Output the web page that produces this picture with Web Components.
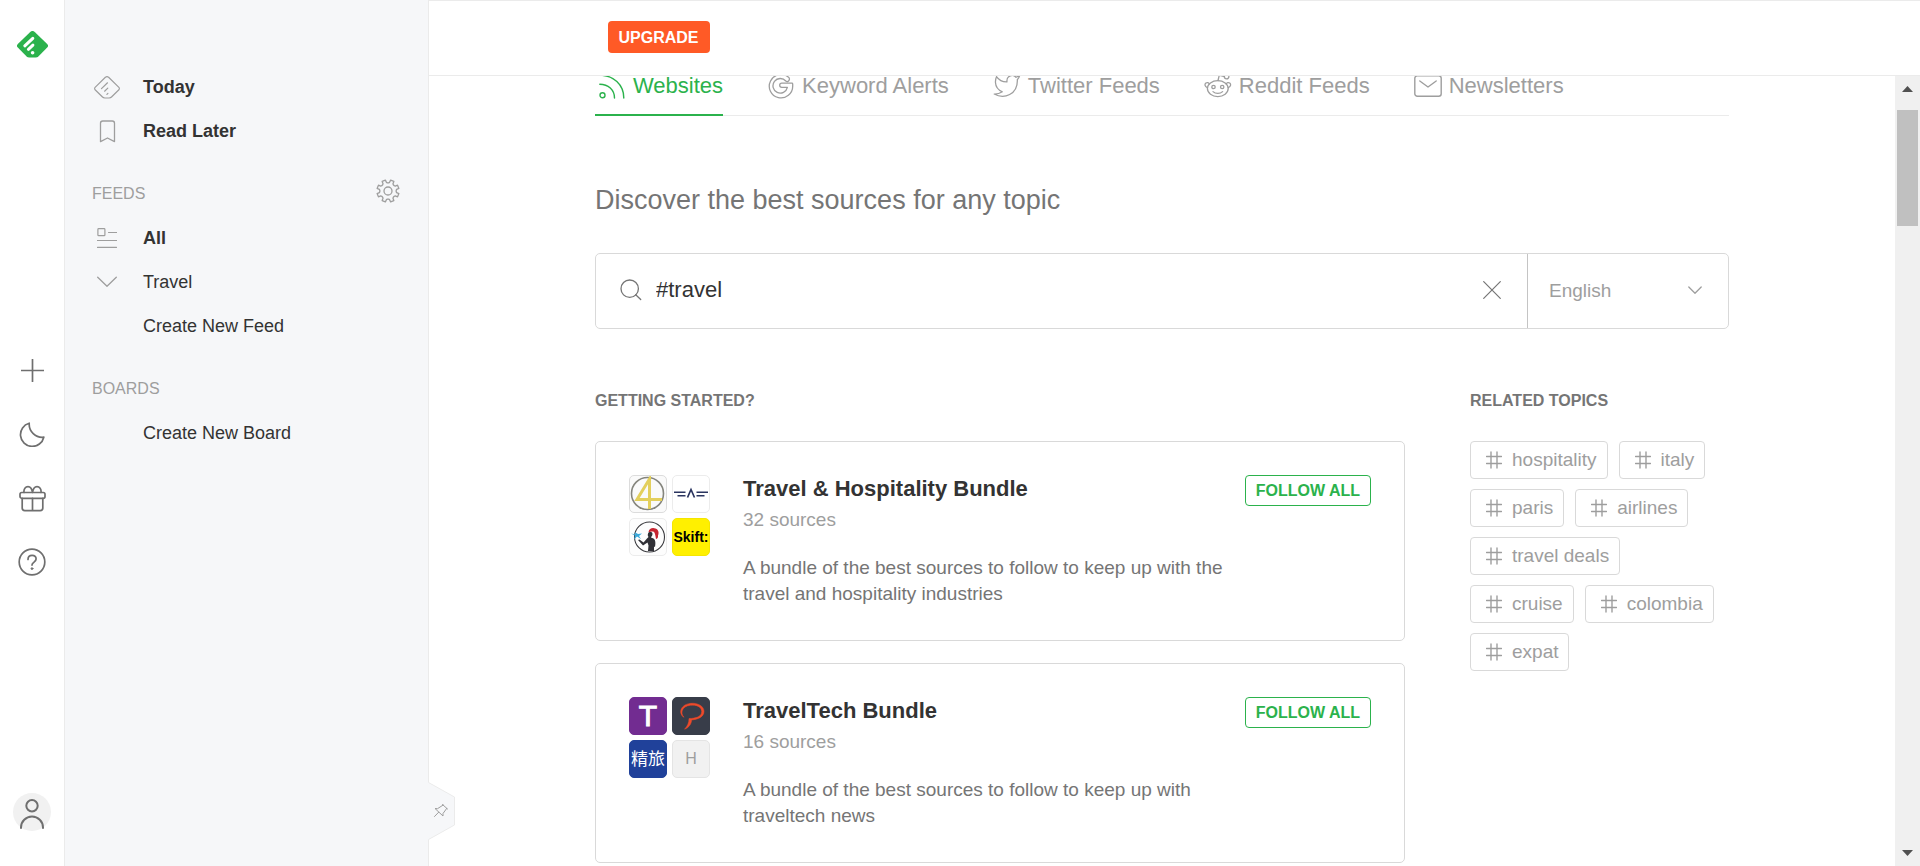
<!DOCTYPE html>
<html lang="en">
<head>
<meta charset="UTF-8">
<meta name="viewport" content="width=device-width, initial-scale=1.0">
<title>Discover sources</title>
<style>
  :root {
    --green: #2bb24c;
    --orange: #ff5a26;
    --text: #333;
    --text-mid: #757575;
    --text-light: #9e9e9e;
    --line: #d9d9d9;
    --line-soft: #ebebeb;
    --panel: #f6f7f9;
  }

  body {
    margin: 0;
    font-family: "Liberation Sans", Arial, "Noto Sans CJK SC", sans-serif;
    font-size: 19px;
    color: var(--text);
    background: #fff;
  }
</style>
</head>
<body>
<app-shell>
  <nav-rail slot="rail"></nav-rail>

  <side-nav slot="side">
    <side-item icon="today" strong>Today</side-item>
    <side-item icon="bookmark" strong>Read Later</side-item>
    <side-heading settings>FEEDS</side-heading>
    <side-item icon="list" strong>All</side-item>
    <side-item icon="chevron">Travel</side-item>
    <side-item>Create New Feed</side-item>
    <side-heading>BOARDS</side-heading>
    <side-item>Create New Board</side-item>
  </side-nav>

  <top-bar slot="top"></top-bar>

  <discover-page>
    <source-tab slot="tabs" icon="rss" active>Websites</source-tab>
    <source-tab slot="tabs" icon="google">Keyword Alerts</source-tab>
    <source-tab slot="tabs" icon="twitter">Twitter Feeds</source-tab>
    <source-tab slot="tabs" icon="reddit">Reddit Feeds</source-tab>
    <source-tab slot="tabs" icon="mail">Newsletters</source-tab>

    <source-search slot="search"></source-search>

    <bundle-card slot="bundles">
      <source-logo slot="logos" logo="four"></source-logo>
      <source-logo slot="logos" logo="wings"></source-logo>
      <source-logo slot="logos" logo="traveler"></source-logo>
      <source-logo slot="logos" logo="skift"></source-logo>
      <span slot="title">Travel &amp; Hospitality Bundle</span>
      <span slot="count">32 sources</span>
      A bundle of the best sources to follow to keep up with the travel and hospitality industries
    </bundle-card>
    <bundle-card slot="bundles">
      <source-logo slot="logos" logo="tnooz"></source-logo>
      <source-logo slot="logos" logo="phocus"></source-logo>
      <source-logo slot="logos" logo="jinglv"></source-logo>
      <source-logo slot="logos" logo="letter"></source-logo>
      <span slot="title">TravelTech Bundle</span>
      <span slot="count">16 sources</span>
      A bundle of the best sources to follow to keep up with traveltech news
    </bundle-card>

    <topic-tag slot="topics">hospitality</topic-tag>
    <topic-tag slot="topics">italy</topic-tag>
    <topic-tag slot="topics">paris</topic-tag>
    <topic-tag slot="topics">airlines</topic-tag>
    <topic-tag slot="topics">travel deals</topic-tag>
    <topic-tag slot="topics">cruise</topic-tag>
    <topic-tag slot="topics">colombia</topic-tag>
    <topic-tag slot="topics">expat</topic-tag>
  </discover-page>

  <scroll-track slot="scroll"></scroll-track>
</app-shell>

<script>
// Eight rounded teeth around a centre point
function gearPath(c, outer, inner) {
  const pts = [];
  for (let i = 0; i < 8; i++) {
    const mid = i * 45 + 22.5;
    [[-18, inner], [-12, inner + 0.6], [-9, outer], [9, outer], [12, inner + 0.6], [18, inner]].forEach(([d, r]) => {
      const a = (mid + d) * Math.PI / 180;
      pts.push((c + r * Math.cos(a)).toFixed(2) + ' ' + (c + r * Math.sin(a)).toFixed(2));
    });
  }
  return 'M' + pts.join('L') + 'Z';
}

// name: [width, height, stroke width, markup]
const ICONS = {
  logo: [31, 27, 0, `
    <path d="M13 1.2a3.6 3.6 0 0 1 5 0L30.2 13a2.6 2.6 0 0 1 0 3.6l-8.6 8.6a4.5 4.5 0 0 1-3 1.3h-6.2a4.5 4.5 0 0 1-3-1.3L.8 16.6a2.6 2.6 0 0 1 0-3.6z" fill="#2bb24c"/>
    <g stroke="#fff" stroke-width="3" stroke-linecap="round"><path d="M7.8 14.8l8-7.500M11.400 18.300l4.500-4.200"/></g>
    <circle cx="15.600" cy="21.700" r="1.800" fill="#fff"/>`],
  plus: [23, 23, 1.7, '<path d="M11.5.5v22M.5 11.5h22"/>'],
  moon: [26, 25, 1.7, '<path d="M10.2 1.2A11.8 11.8 0 1 0 24.8 15.2 13.2 13.2 0 0 1 10.2 1.2z"/>'],
  gift: [27, 27, 1.7, `
    <rect x="1" y="7.5" width="25" height="5.8" rx="1.8"/>
    <path d="M3.2 13.3v9.7a2.6 2.6 0 0 0 2.6 2.6h15.4a2.6 2.6 0 0 0 2.6-2.6v-9.7M13.5 13.3v12.3M5 7.5C4.5 3.8 6.5 1.6 9 1.6c2.6 0 4 2.5 4.5 5.9C14 4.1 15.4 1.6 18 1.6c2.5 0 4.5 2.2 4 5.9"/>`],
  help: [28, 28, 1.7, `
    <circle cx="14" cy="14" r="12.8"/>
    <path d="M10 11.4c0-2.6 1.8-4 4.1-4s4 1.4 4 3.7c0 3-4.1 3-4.1 6"/>
    <circle cx="14" cy="20.6" r=".9" fill="currentColor" stroke-width="1"/>`],
  user: [38, 38, 2, '<circle cx="19" cy="12.8" r="5.7"/><path d="M8 35v-.5a11 11 0 0 1 22 0v.5"/>'],
  today: [26, 23, 1.2, `
    <path d="M11.4 1.3a2.2 2.2 0 0 1 3.2 0L24.9 11.4a1.6 1.6 0 0 1 0 2.3L17.5 21a3.3 3.3 0 0 1-2.3 1h-4.4a3.3 3.3 0 0 1-2.3-1L1.1 13.7a1.6 1.6 0 0 1 0-2.300z"/>
    <path d="M7.500 12.600l6-5.800M10.600 15.200l3.200-3.100M12.900 18.300l1-1"/>`],
  bookmark: [17, 23, 1.3, '<path d="M1.5 21.6V3.2A2.2 2.2 0 0 1 3.700 1h9.600a2.200 2.200 0 0 1 2.200 2.200v18.400l-7-3.600z"/>'],
  list: [20, 20, 1.2, '<rect x=".9" y=".7" width="7" height="7" rx=".8"/><path d="M11.5 4.500h8M.5 12.500h19M.5 19.300h19"/>'],
  chevron: [20, 12, 1.3, '<path d="M.7 1.2l9.300 9 9.300-9"/>'],
  chevronSmall: [14, 9, 1.3, '<path d="M.8 1l6.200 6.200L13.200 1"/>'],
  gear: [24, 24, 1.3, `<path d="${gearPath(12, 11.2, 8.2)}"/><circle cx="12" cy="12" r="4"/>`],
  rss: [26, 26, 1.4, '<circle cx="3.5" cy="22.200" r="2.500"/><path d="M.8 2.200c13.500 0 24 9.500 24 22.800M.8 11.200C9.200 11.200 15.500 17 15.500 25"/>'],
  google: [26, 26, 1.3, '<path d="M20.600 4.300A11.700 11.700 0 1 0 24.700 13v-2a.8.8 0 0 0-.8-.8H13.800a2 2 0 0 0 0 4.200h5.600A7.300 7.300 0 1 1 17.800 8a2.200 2.200 0 0 0 3-.3 2.300 2.300 0 0 0-.2-3.400z"/>'],
  twitter: [28, 24, 1.3, '<path transform="translate(0 -2) scale(1.16)" stroke-width="1.1" d="M23 3a10.900 10.900 0 0 1-3.140 1.530 4.480 4.480 0 0 0-7.860 3v1A10.660 10.660 0 0 1 3 4s-4 9 5 13a11.640 11.640 0 0 1-7 2c9 5 20 0 20-11.500a4.500 4.500 0 0 0-.08-.83A7.720 7.720 0 0 0 23 3z"/>'],
  reddit: [28, 24, 1.3, `
    <ellipse cx="13.800" cy="14.600" rx="10.400" ry="8"/>
    <path d="M5.300 9.900C4.600 8.400 3 8.200 1.900 9.100c-1.400 1.100-1.300 3.200 1.500 4.700M22.300 9.900c.7-1.500 2.300-1.700 3.400-.8 1.400 1.100 1.300 3.200-1.500 4.700M14 6.500l1.300-5.300 5.200 1.400M9 17.600c2.500 2.400 7.100 2.400 9.600 0"/>
    <circle cx="9.500" cy="13" r="1.700"/><circle cx="18.200" cy="13" r="1.700"/><circle cx="22.600" cy="2.600" r="2.300"/>`],
  mail: [28, 22, 1.4, '<rect x=".8" y=".8" width="26.400" height="20.400" rx="2.500"/><path d="M5.800 6l8.200 6 8.200-6"/>'],
  search: [22, 22, 1.3, '<circle cx="9.700" cy="9.700" r="8.700"/><path d="M15.700 15.700l5 4.800"/>'],
  close: [18, 18, 1.2, '<path d="M.7.7l16.600 16.600M17.300.7L.7 17.300"/>'],
  hash: [16, 18, 1.4, '<path d="M5 1v16M11 1v16M.5 5.500h15M.5 12.500h15"/>'],
  pin: [16, 16, 1, '<path d="M9.500 1.500l5 4.500M10.200 2L4.500 5.700 2 5.500l8 7.500v-2.500l3.800-5.200M5.700 9.200L1.500 13.500"/>']
};

class UiIcon extends HTMLElement {
  constructor() {
    super();
    this.attachShadow({ mode: 'open' });
  }

  connectedCallback() {
    const [w, h, stroke, body] = ICONS[this.getAttribute('name')];
    this.shadowRoot.innerHTML = `
      <style>
        :host { display: inline-flex; flex: none; }
        svg { display: block; }
      </style>
      <svg width="${w}" height="${h}" viewBox="0 0 ${w} ${h}" fill="none" stroke="${stroke ? 'currentColor' : 'none'}"
        stroke-width="${stroke}" stroke-linecap="round" stroke-linejoin="round" aria-hidden="true">${body}</svg>
    `;
  }
}

class AppShell extends HTMLElement {
  constructor() {
    super();
    this.attachShadow({ mode: 'open' });
    this.shadowRoot.innerHTML = `
      <style>
        :host {
          display: flex;
          height: 100vh;
          overflow: hidden;
        }

        .main {
          flex: 1;
          min-width: 0;
          display: flex;
          flex-direction: column;
        }

        .view {
          flex: 1;
          min-height: 0;
          display: flex;
        }

        main {
          flex: 1;
          min-width: 0;
          overflow: hidden;
        }
      </style>
      <slot name="rail"></slot>
      <slot name="side"></slot>
      <div class="main">
        <slot name="top"></slot>
        <div class="view">
          <main><slot></slot></main>
          <slot name="scroll"></slot>
        </div>
      </div>
    `;
  }
}

class NavRail extends HTMLElement {
  constructor() {
    super();
    this.attachShadow({ mode: 'open' });
    this.shadowRoot.innerHTML = `
      <style>
        :host {
          display: flex;
          flex-direction: column;
          align-items: center;
          flex: none;
          width: 64px;
          padding: 31px 0 35px;
          box-sizing: border-box;
          color: #6f6f6f;
        }

        .tools {
          display: flex;
          flex-direction: column;
          gap: 24px;
          margin: auto 0 211px;
        }

        button {
          display: flex;
          align-items: center;
          justify-content: center;
          width: 40px;
          height: 40px;
          padding: 0;
          border: 0;
          background: none;
          color: inherit;
        }

        .account {
          width: 38px;
          height: 38px;
          border-radius: 50%;
          background: #f1f1f1;
        }
      </style>
      <a href="#" aria-label="Home"><ui-icon name="logo"></ui-icon></a>
      <div class="tools">
        <button aria-label="Add content"><ui-icon name="plus"></ui-icon></button>
        <button aria-label="Night mode"><ui-icon name="moon"></ui-icon></button>
        <button aria-label="Gift"><ui-icon name="gift"></ui-icon></button>
        <button aria-label="Help"><ui-icon name="help"></ui-icon></button>
      </div>
      <button class="account" aria-label="Account"><ui-icon name="user"></ui-icon></button>
    `;
  }
}

class SideNav extends HTMLElement {
  constructor() {
    super();
    this.attachShadow({ mode: 'open' });
    this.shadowRoot.innerHTML = `
      <style>
        :host {
          display: block;
          position: relative;
          z-index: 1;
          flex: none;
          width: 365px;
          padding-top: 65px;
          box-sizing: border-box;
          background: var(--panel);
          border-left: 1px solid var(--line-soft);
          border-right: 1px solid var(--line-soft);
        }

        /* Tab that sticks out over the page */
        .pin {
          position: absolute;
          left: 100%;
          bottom: 26px;
          display: flex;
          padding: 0;
          border: 0;
          background: none;
          color: var(--text-light);
        }

        .pin ui-icon {
          position: absolute;
          left: 5px;
          top: 21px;
        }
      </style>
      <nav><slot></slot></nav>
      <button class="pin" aria-label="Pin sidebar">
        <svg width="27" height="58" viewBox="0 0 27 58" aria-hidden="true">
          <path d="M0 0l26.500 15v28L0 58z" fill="#f6f7f9"/>
          <path d="M.5.500l26 14.500v28L.5 57.500" fill="none" stroke="#ebebeb"/>
        </svg>
        <ui-icon name="pin"></ui-icon>
      </button>
    `;
  }
}

class SideItem extends HTMLElement {
  constructor() {
    super();
    this.attachShadow({ mode: 'open' });
  }

  connectedCallback() {
    const icon = this.getAttribute('icon');
    this.shadowRoot.innerHTML = `
      <style>
        :host { display: block; }
        :host([strong]) { font-weight: 700; }

        a {
          display: flex;
          align-items: center;
          height: 44px;
          padding-left: 22px;
          font-size: 18px;
          color: var(--text);
          text-decoration: none;
        }

        .icon {
          display: flex;
          justify-content: center;
          width: 40px;
          margin-right: 16px;
          color: var(--text-light);
        }
      </style>
      <a href="#">
        <span class="icon">${icon ? `<ui-icon name="${icon}"></ui-icon>` : ''}</span>
        <slot></slot>
      </a>
    `;
  }
}

class SideHeading extends HTMLElement {
  constructor() {
    super();
    this.attachShadow({ mode: 'open' });
  }

  connectedCallback() {
    this.shadowRoot.innerHTML = `
      <style>
        :host {
          display: flex;
          align-items: center;
          justify-content: space-between;
          height: 44px;
          padding: 19px 28px 0 27px;
          font-size: 16px;
          color: var(--text-light);
        }

        button {
          display: flex;
          padding: 0 0 6px;
          border: 0;
          background: none;
          color: inherit;
        }
      </style>
      <slot></slot>
      ${this.hasAttribute('settings') ? '<button aria-label="Organize feeds"><ui-icon name="gear"></ui-icon></button>' : ''}
    `;
  }
}

class TopBar extends HTMLElement {
  constructor() {
    super();
    this.attachShadow({ mode: 'open' });
    this.shadowRoot.innerHTML = `
      <style>
        :host {
          display: block;
          background: #fff;
          border-top: 1px solid var(--line-soft);
          border-bottom: 1px solid var(--line-soft);
        }

        .inner {
          display: flex;
          align-items: center;
          max-width: 1134px;
          height: 74px;
          margin: 0 auto;
          box-sizing: border-box;
          padding-bottom: 2px;
        }

        button {
          height: 32px;
          padding: 1px 11px 0;
          border: 0;
          border-radius: 4px;
          background: var(--orange);
          color: #fff;
          font: 700 16px "Liberation Sans", Arial, sans-serif;
        }
      </style>
      <div class="inner"><button>UPGRADE</button></div>
    `;
  }
}

class DiscoverPage extends HTMLElement {
  constructor() {
    super();
    this.attachShadow({ mode: 'open' });
    this.shadowRoot.innerHTML = `
      <style>
        :host {
          display: block;
          max-width: 1134px;
          margin: -10px auto 0;
        }

        .tabs {
          display: flex;
          gap: 41px;
          height: 50px;
          box-sizing: border-box;
          border-bottom: 1px solid var(--line-soft);
        }

        h1 {
          margin: 68px 0 36px;
          font-size: 27px;
          font-weight: 400;
          line-height: 33px;
          color: var(--text-mid);
        }

        .columns {
          display: flex;
          gap: 65px;
          margin-top: 62px;
        }

        section {
          flex: 1;
          min-width: 0;
        }

        aside { width: 259px; }

        h2 {
          margin: 0 0 30px;
          font-size: 16px;
          line-height: 20px;
          color: var(--text-mid);
        }

        .bundles {
          display: flex;
          flex-direction: column;
          gap: 22px;
        }

        .topics {
          display: flex;
          flex-wrap: wrap;
          gap: 10px 11px;
        }
      </style>
      <nav class="tabs"><slot name="tabs"></slot></nav>
      <h1>Discover the best sources for any topic</h1>
      <slot name="search"></slot>
      <div class="columns">
        <section>
          <h2>GETTING STARTED?</h2>
          <div class="bundles"><slot name="bundles"></slot></div>
        </section>
        <aside>
          <h2>RELATED TOPICS</h2>
          <div class="topics"><slot name="topics"></slot></div>
        </aside>
      </div>
    `;
  }
}

class SourceTab extends HTMLElement {
  constructor() {
    super();
    this.attachShadow({ mode: 'open' });
  }

  connectedCallback() {
    this.shadowRoot.innerHTML = `
      <style>
        :host { display: block; }

        a {
          display: flex;
          align-items: center;
          gap: 4px;
          height: 50px;
          box-sizing: border-box;
          padding-bottom: 8px;
          border-bottom: 2px solid transparent;
          font-size: 22px;
          color: var(--text-light);
          text-decoration: none;
          white-space: nowrap;
        }

        :host([active]) a {
          color: var(--green);
          border-color: var(--green);
        }

        .icon {
          display: flex;
          justify-content: center;
          width: 34px;
        }
      </style>
      <a href="#"><span class="icon"><ui-icon name="${this.getAttribute('icon')}"></ui-icon></span><slot></slot></a>
    `;
  }
}

class SourceSearch extends HTMLElement {
  constructor() {
    super();
    this.attachShadow({ mode: 'open' });
    this.shadowRoot.innerHTML = `
      <style>
        :host {
          display: flex;
          height: 76px;
          box-sizing: border-box;
          border: 1px solid var(--line);
          border-radius: 5px;
          color: var(--text-light);
        }

        .query {
          flex: 1;
          display: flex;
          align-items: center;
          gap: 14px;
          padding: 0 26px 2px 24px;
          border-right: 1px solid #c4c4c4;
        }

        .query ui-icon { color: var(--text-mid); }

        input {
          flex: 1;
          min-width: 0;
          padding: 0;
          border: 0;
          outline: 0;
          background: none;
          font: 22px "Liberation Sans", Arial, sans-serif;
          color: var(--text);
        }

        button {
          display: flex;
          padding: 0;
          border: 0;
          background: none;
        }

        button ui-icon { color: var(--text-light); }

        .language {
          display: flex;
          align-items: center;
          width: 200px;
          box-sizing: border-box;
          padding: 0 26px 2px 21px;
        }

        select {
          flex: 1;
          min-width: 0;
          padding: 0;
          border: 0;
          background: none;
          appearance: none;
          font: 19px "Liberation Sans", Arial, sans-serif;
          color: var(--text-light);
        }
      </style>
      <div class="query">
        <ui-icon name="search"></ui-icon>
        <input type="text" value="#travel" aria-label="Search sources">
        <button aria-label="Clear"><ui-icon name="close"></ui-icon></button>
      </div>
      <div class="language">
        <select aria-label="Language"><option>English</option></select>
        <ui-icon name="chevronSmall"></ui-icon>
      </div>
    `;
  }
}

class BundleCard extends HTMLElement {
  constructor() {
    super();
    this.attachShadow({ mode: 'open' });
    this.shadowRoot.innerHTML = `
      <style>
        :host {
          display: flex;
          align-items: flex-start;
          min-height: 200px;
          box-sizing: border-box;
          padding: 33px;
          border: 1px solid var(--line);
          border-radius: 5px;
        }

        .logos {
          display: grid;
          grid-template-columns: 38px 38px;
          gap: 5px;
        }

        .info {
          width: 500px;
          margin-left: 33px;
        }

        h3 {
          margin: 0;
          font-size: 22px;
          line-height: 28px;
        }

        .count {
          margin: 3px 0 21px;
          line-height: 28px;
          color: var(--text-light);
        }

        .about {
          margin: 0;
          line-height: 26px;
          color: var(--text-mid);
        }

        button {
          height: 31px;
          margin-left: auto;
          padding: 0 10px;
          border: 1px solid var(--green);
          border-radius: 4px;
          background: none;
          color: var(--green);
          font: 700 16px "Liberation Sans", Arial, sans-serif;
          white-space: nowrap;
        }
      </style>
      <div class="logos"><slot name="logos"></slot></div>
      <div class="info">
        <h3><slot name="title"></slot></h3>
        <p class="count"><slot name="count"></slot></p>
        <p class="about"><slot></slot></p>
      </div>
      <button>FOLLOW ALL</button>
    `;
  }
}

// name: [background, border, content]
const LOGOS = {
  four: ['#fafafa', '#dcdcdc', `<svg viewBox="0 0 38 38">
    <circle cx="18.500" cy="18.500" r="16" fill="none" stroke="#85857d" stroke-width="1.600"/>
    <path d="M20.500 34V4L8 24.500h25" fill="none" stroke="#e3cf5c" stroke-width="3"/></svg>`],
  wings: ['#fff', '#ececec', `<svg viewBox="0 0 38 38" fill="none" stroke="#2b3560" stroke-width="1.500">
    <path d="M2 17.200h11.500M5.500 20.800h8M36 17.200H24.500M32.500 20.800h-8"/>
    <path d="M15.500 22.500L19 14.500l3.500 8" stroke-width="1.700"/></svg>`],
  traveler: ['#fdfdfd', '#ececec', `<svg viewBox="0 0 38 38">
    <circle cx="20.500" cy="19" r="15" fill="none" stroke="#3c3c40" stroke-width="1.100"/>
    <path d="M2 15.500l4.500 1-1-2.500 3.500 2 4-.5-3 2.500 2 3-4-2.500-3 3 1-4z" fill="#39a9db"/>
    <path d="M19.500 14c.5-3.500 4-5 7-3.500 3.500 1 3.500 5 2.500 7 .5 2-1 3.500-2 3.500-.5-3-1-6-2-7-2-1-3 0-5.500 0z" fill="#c62430"/>
    <path d="M19.500 14.500c2-1 4-.5 4 1.500s-1.500 2.500-1.500 3.500l2.500 1c2.500 1.500 2 6 1.500 8.500l-1-.5v4.500h-6l.5-5.500-1-3-4.500 3-5-5.500 1.500-.5 4 3 3.500-4 1.500-1.500c-1-1-1-3 0-4.500z" fill="#303036"/></svg>`],
  skift: ['#fff000', '#f5e600', '<b style="font-size:14px">Skift:</b>'],
  tnooz: ['#722c91', '#722c91', '<span style="font-size:30px;-webkit-text-stroke:1px #fff;color:#fff">T</span>'],
  phocus: ['#383d49', '#383d49', `<svg viewBox="0 0 38 38">
    <path d="M12 20.300C6.500 17 7.500 8 18 6.400c8-1 14 3 14 8 0 5.500-6 8-12.500 8.600.3 3-2.500 8-7 9.200 3-3 4.500-6.500 4.500-10.700 7 0 12.700-2 12.700-7 0-4.500-5-7-11.500-6.200-8.500 1-10.200 8-6.200 12z" fill="#ee4b2b" stroke="#ee4b2b" stroke-width=".5"/></svg>`],
  jinglv: ['#20419a', '#20419a', '<span style="font-size:17px;color:#fff">精旅</span>'],
  letter: ['#f1f1f1', '#e4e4e4', '<span style="font-size:16px;color:#9e9e9e">H</span>']
};

class SourceLogo extends HTMLElement {
  constructor() {
    super();
    this.attachShadow({ mode: 'open' });
  }

  connectedCallback() {
    const [bg, border, body] = LOGOS[this.getAttribute('logo')];
    this.shadowRoot.innerHTML = `
      <style>
        :host {
          display: flex;
          align-items: center;
          justify-content: center;
          width: 38px;
          height: 38px;
          box-sizing: border-box;
          border: 1px solid ${border};
          border-radius: 5px;
          background: ${bg};
          color: #000;
          line-height: 1;
          white-space: nowrap;
          overflow: hidden;
        }

        svg {
          flex: none;
          width: 38px;
          height: 38px;
        }
      </style>
      ${body}
    `;
  }
}

class TopicTag extends HTMLElement {
  constructor() {
    super();
    this.attachShadow({ mode: 'open' });
    this.shadowRoot.innerHTML = `
      <style>
        :host { display: block; }

        a {
          display: flex;
          align-items: center;
          gap: 10px;
          height: 38px;
          box-sizing: border-box;
          padding: 0 10px 0 15px;
          border: 1px solid var(--line);
          border-radius: 4px;
          color: var(--text-light);
          text-decoration: none;
          white-space: nowrap;
        }
      </style>
      <a href="#"><ui-icon name="hash"></ui-icon><slot></slot></a>
    `;
  }
}

class ScrollTrack extends HTMLElement {
  constructor() {
    super();
    this.attachShadow({ mode: 'open' });
    this.shadowRoot.innerHTML = `
      <style>
        :host {
          display: flex;
          flex-direction: column;
          align-items: center;
          flex: none;
          width: 25px;
          padding: 10px 0;
          box-sizing: border-box;
          background: #f0f0f0;
        }

        svg { fill: #505050; }

        .thumb {
          width: 21px;
          height: 116px;
          margin: 18px 0 auto;
          background: #c0c0c0;
        }
      </style>
      <svg width="11" height="6" viewBox="0 0 11 6" aria-hidden="true"><path d="M5.500 0L11 6H0z"/></svg>
      <div class="thumb"></div>
      <svg width="11" height="6" viewBox="0 0 11 6" aria-hidden="true"><path d="M5.500 6L11 0H0z"/></svg>
    `;
  }
}

customElements.define('ui-icon', UiIcon);
customElements.define('app-shell', AppShell);
customElements.define('nav-rail', NavRail);
customElements.define('side-nav', SideNav);
customElements.define('side-item', SideItem);
customElements.define('side-heading', SideHeading);
customElements.define('top-bar', TopBar);
customElements.define('discover-page', DiscoverPage);
customElements.define('source-tab', SourceTab);
customElements.define('source-search', SourceSearch);
customElements.define('bundle-card', BundleCard);
customElements.define('source-logo', SourceLogo);
customElements.define('topic-tag', TopicTag);
customElements.define('scroll-track', ScrollTrack);
</script>
</body>
</html>
